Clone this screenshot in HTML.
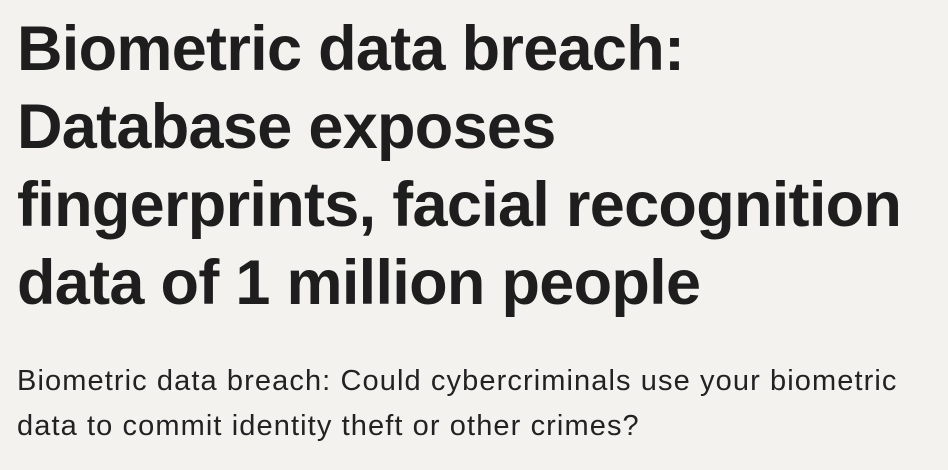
<!DOCTYPE html>
<html><head><meta charset="utf-8"><style>
html,body{margin:0;padding:0;background:#f4f2ef;width:948px;height:470px;overflow:hidden}
h1{margin:0;position:absolute;left:17px;top:10px;font-family:"Liberation Sans",sans-serif;font-weight:700;font-size:63px;line-height:78px;color:#1e1e1e;letter-spacing:-0.7px;width:940px}
p{margin:0;position:absolute;left:17px;top:359px;font-family:"Liberation Sans",sans-serif;font-size:29px;line-height:45px;color:#222;width:935px;letter-spacing:1.1px;white-space:nowrap}
</style></head><body>
<h1>Biometric data breach:<br>Database exposes<br>fingerprints, facial recognition<br>data of 1 million people</h1>
<p>Biometric data breach: Could cybercriminals use your biometric<br>data to commit identity theft or other crimes?</p>
</body></html>
